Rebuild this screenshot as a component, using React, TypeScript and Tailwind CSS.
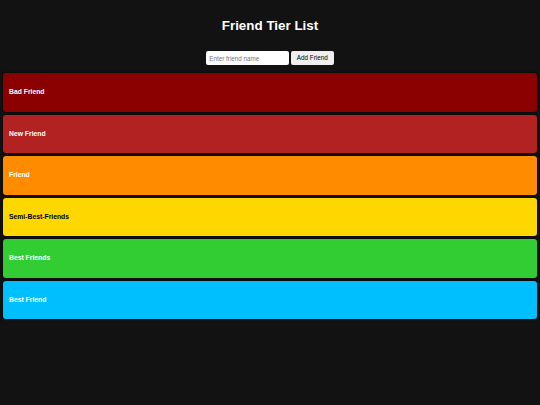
const tiers = [
  { name: "Bad Friend", bg: "bg-[#8b0000]", text: "text-white" },
  { name: "New Friend", bg: "bg-[#b22222]", text: "text-white" },
  { name: "Friend", bg: "bg-[#ff8c00]", text: "text-white" },
  { name: "Semi-Best-Friends", bg: "bg-[#ffd700]", text: "text-black" },
  { name: "Best Friends", bg: "bg-[#32cd32]", text: "text-white" },
  { name: "Best Friend", bg: "bg-[#00bfff]", text: "text-white" },
];

export default function App() {
  return (
    <div className="w-[540px] h-[405px] bg-[#121212] text-white font-['Liberation_Sans',Arial,sans-serif] overflow-hidden">
      <h1 className="pt-[17px] text-center text-[13.4px] font-bold leading-[18px]">Friend Tier List</h1>

      <div className="mt-[16px] flex justify-center gap-[1.5px]">
        <input
          className="w-[83px] h-[14px] bg-white rounded-[2px] px-[3px] text-[6.3px] text-black placeholder:text-[#777] outline-none"
          placeholder="Enter friend name"
        />
        <button className="w-[43px] h-[14px] bg-[#efefef] rounded-[2px] text-[6.3px] text-black">Add Friend</button>
      </div>

      <div className="mt-[8px] px-[3px] flex flex-col gap-[3px]">
        {tiers.map((t) => (
          <div
            key={t.name}
            className={`h-[38.5px] rounded-[3px] flex items-center pl-[6px] shadow-[0_0_3px_rgba(0,0,0,0.8)] ${t.bg} ${t.text}`}
          >
            <span className="text-[6.8px] font-bold">{t.name}</span>
          </div>
        ))}
      </div>
    </div>
  );
}
